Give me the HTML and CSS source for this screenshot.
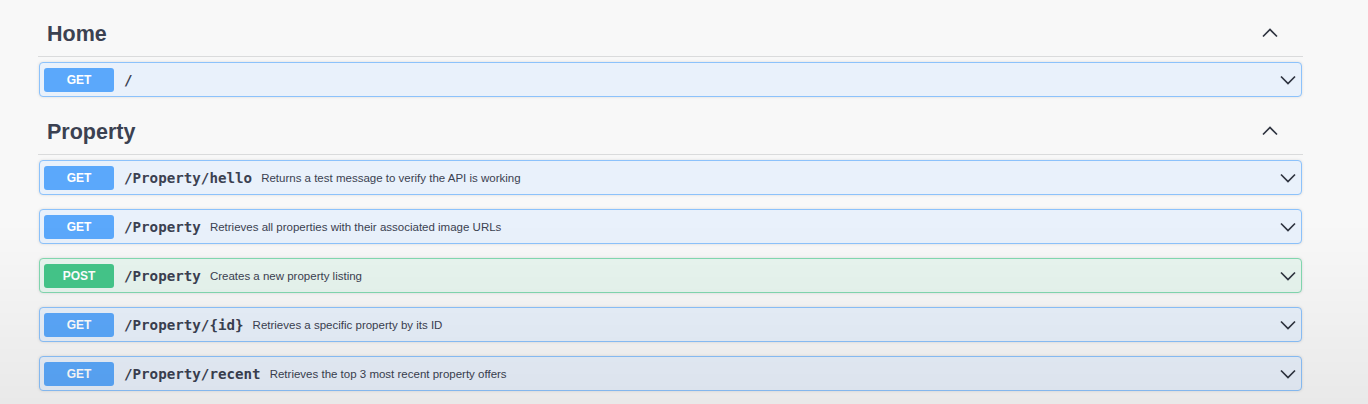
FILE: index.html
```html
<!DOCTYPE html>
<html>
<head>
<meta charset="utf-8">
<link rel="stylesheet" href="styles.css">
</head>
<body>
<div class="wrapper">
  <section class="tag-section">
    <div class="tag-header">
      <h3 class="tag-title">Home</h3>
      <svg class="arrow-up" width="20" height="12" viewBox="0 0 20 12"><polyline points="3,9.5 10,2.5 17,9.5" fill="none" stroke="#2f3440" stroke-width="1.7"/></svg>
    </div>
    <div class="ops">
      <div class="opblock get">
        <span class="method">GET</span>
        <span class="path">/</span>
        <span class="desc"></span>
        <svg class="arrow-down" width="20" height="12" viewBox="0 0 20 12"><polyline points="3,2.5 10,9.5 17,2.5" fill="none" stroke="#2f3440" stroke-width="1.7"/></svg>
      </div>
    </div>
  </section>
  <section class="tag-section">
    <div class="tag-header">
      <h3 class="tag-title">Property</h3>
      <svg class="arrow-up" width="20" height="12" viewBox="0 0 20 12"><polyline points="3,9.5 10,2.5 17,9.5" fill="none" stroke="#2f3440" stroke-width="1.7"/></svg>
    </div>
    <div class="ops">
      <div class="opblock get">
        <span class="method">GET</span>
        <span class="path">/Property/hello</span>
        <span class="desc">Returns a test message to verify the API is working</span>
        <svg class="arrow-down" width="20" height="12" viewBox="0 0 20 12"><polyline points="3,2.5 10,9.5 17,2.5" fill="none" stroke="#2f3440" stroke-width="1.7"/></svg>
      </div>
      <div class="opblock get">
        <span class="method">GET</span>
        <span class="path">/Property</span>
        <span class="desc">Retrieves all properties with their associated image URLs</span>
        <svg class="arrow-down" width="20" height="12" viewBox="0 0 20 12"><polyline points="3,2.5 10,9.5 17,2.5" fill="none" stroke="#2f3440" stroke-width="1.7"/></svg>
      </div>
      <div class="opblock post">
        <span class="method">POST</span>
        <span class="path">/Property</span>
        <span class="desc">Creates a new property listing</span>
        <svg class="arrow-down" width="20" height="12" viewBox="0 0 20 12"><polyline points="3,2.5 10,9.5 17,2.5" fill="none" stroke="#2f3440" stroke-width="1.7"/></svg>
      </div>
      <div class="opblock get">
        <span class="method">GET</span>
        <span class="path">/Property/{id}</span>
        <span class="desc">Retrieves a specific property by its ID</span>
        <svg class="arrow-down" width="20" height="12" viewBox="0 0 20 12"><polyline points="3,2.5 10,9.5 17,2.5" fill="none" stroke="#2f3440" stroke-width="1.7"/></svg>
      </div>
      <div class="opblock get">
        <span class="method">GET</span>
        <span class="path">/Property/recent</span>
        <span class="desc">Retrieves the top 3 most recent property offers</span>
        <svg class="arrow-down" width="20" height="12" viewBox="0 0 20 12"><polyline points="3,2.5 10,9.5 17,2.5" fill="none" stroke="#2f3440" stroke-width="1.7"/></svg>
      </div>
    </div>
  </section>
</div>
<div class="vignette"></div>
</body>
</html>
```
FILE: styles.css
```css
html, body {
  margin: 0;
  padding: 0;
}
body {
  background: #f8f8f8;
  font-family: "Liberation Sans", Arial, sans-serif;
  color: #3b4151;
  height: 404px;
  overflow: hidden;
}
.wrapper {
  padding: 9px 65px 0 38px;
}
.tag-section {
  margin-bottom: 10px;
}
.tag-header {
  height: 47px;
  border-bottom: 1px solid #dadbdc;
  display: flex;
  align-items: center;
  justify-content: space-between;
  padding: 0 23px 0 9px;
}
.tag-title {
  margin: 0;
  font-size: 21.5px;
  font-weight: bold;
  color: #3b4151;
  padding-top: 3px;
}
.ops {
  padding: 5px 1px 0 1px;
  display: flex;
  flex-direction: column;
  gap: 14px;
}
.opblock {
  height: 35px;
  box-sizing: border-box;
  border: 1px solid #61affe;
  border-radius: 4px;
  display: flex;
  align-items: center;
  padding: 0 4px;
  box-shadow: 0 0 3px rgba(0, 0, 0, 0.12);
}
.opblock.get {
  background: #e9f1fb;
  border-color: #8cc2fb;
}
.opblock.post {
  background: #e8f5ef;
  border-color: #83d9b1;
}
.method {
  width: 70px;
  height: 24px;
  border-radius: 3px;
  color: #fff;
  font-weight: bold;
  font-size: 12px;
  display: flex;
  align-items: center;
  justify-content: center;
  flex-shrink: 0;
}
.get .method {
  background: #5ba8fb;
}
.post .method {
  background: #45c68a;
}
.path {
  font-family: "DejaVu Sans Mono", monospace;
  font-weight: bold;
  font-size: 14.2px;
  color: #3b4151;
  margin-left: 10px;
}
.desc {
  font-size: 11.5px;
  color: #3b4151;
  margin-left: 9px;
  flex: 1;
}
.arrow-down {
  margin-right: -1px;
}
.vignette {
  position: fixed;
  left: 0;
  top: 0;
  width: 100%;
  height: 100%;
  pointer-events: none;
  background: linear-gradient(to bottom, rgba(0,0,0,0) 0%, rgba(0,0,0,0) 55%, rgba(0,0,0,0.06) 100%);
}
```
